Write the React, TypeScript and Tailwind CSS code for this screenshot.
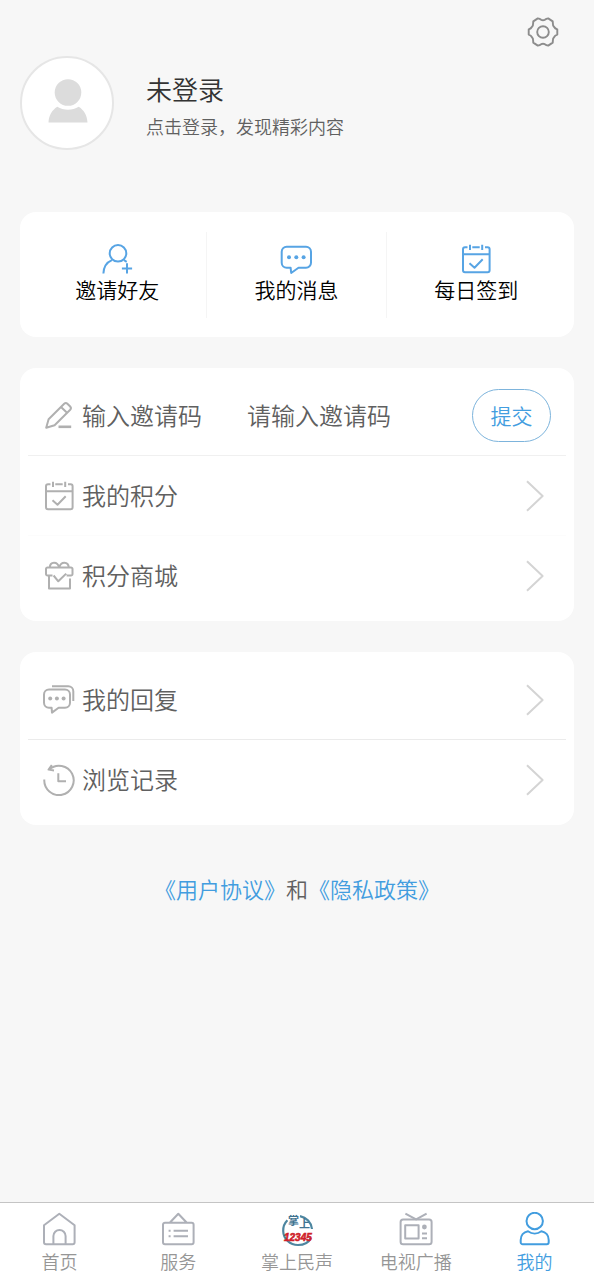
import type { ReactNode } from "react";
import clsx from "clsx";

type IconProps = { className?: string; size?: number; children: ReactNode };

const Icon = ({ className, size = 32, children }: IconProps) => (
  <svg
    width={size}
    height={size}
    viewBox={`0 0 ${size} ${size}`}
    fill="none"
    stroke="currentColor"
    strokeWidth="2"
    strokeLinejoin="round"
    aria-hidden="true"
    className={clsx("shrink-0", className)}
  >
    {children}
  </svg>
);

const GearIcon = () => (
  <svg
    width="32"
    height="32"
    viewBox="-16 -16 32 32"
    fill="none"
    stroke="currentColor"
    strokeWidth="1.9"
    strokeLinejoin="round"
    aria-hidden="true"
  >
    <path d="M14.3 2.6Q11.9 3.4 11.2 5Q9.7 6.4 9.9 8.4L9.7 10.6L5.2 13.6Q3.2 13.2 1.8 12.2Q0 11.4 -1.8 12.2Q-3.2 13.2 -5.2 13.6L-9.7 10.6L-9.9 8.4Q-9.7 6.4 -11.2 5Q-11.9 3.4 -14.3 2.6V-2.6Q-11.9 -3.4 -11.2 -5Q-9.7 -6.4 -9.9 -8.4L-9.7 -10.6L-5.2 -13.6Q-3.2 -13.2 -1.8 -12.2Q0 -11.4 1.8 -12.2Q3.2 -13.2 5.2 -13.6L9.7 -10.6L9.9 -8.4Q9.7 -6.4 11.2 -5Q11.9 -3.4 14.3 -2.6Z" />
    <circle r="5.8" />
  </svg>
);

const InviteIcon = () => (
  <Icon>
    <circle cx="17" cy="10.3" r="8.3" />
    <path d="M2.4 30.5C2.7 23.5 5.7 19.4 10.9 17.2M23 17.2L25.7 18.8M26 20.3V30.6M20.9 25.4H31.1" />
  </Icon>
);

const MessageIcon = () => (
  <Icon>
    <path d="M6.7 3.7H26A5 5 0 0 1 31 8.7V19.7A5 5 0 0 1 26 24.7H18.5L11.2 30L10.6 24.7H6.7A5 5 0 0 1 1.7 19.7V8.7A5 5 0 0 1 6.7 3.7Z" />
    <g fill="currentColor" stroke="none">
      <circle cx="9" cy="14.3" r="2" />
      <circle cx="16.3" cy="14.3" r="2" />
      <circle cx="23.6" cy="14.3" r="2" />
    </g>
  </Icon>
);

const CalendarIcon = () => (
  <Icon>
    <path d="M7.5 4.3H5A2 2 0 0 0 3 6.3V27.3A2 2 0 0 0 5 29.3H27.6A2 2 0 0 0 29.6 27.3V6.3A2 2 0 0 0 27.6 4.3H25M12.3 4.3H19.7M10 1.8V7M22.2 1.8V7M3 11.3H29.6M9.5 20.3L14.5 24.7L22.7 16.3" />
  </Icon>
);

const PencilIcon = () => (
  <Icon>
    <path d="M3.2 27.8L5.6 19.3L21.2 3.7Q22.8 2.2 24.4 3.7L27.2 6.5Q28.7 8.1 27.2 9.7L11.6 25.2ZM18 7L24 12.8" />
    <path d="M15.5 26.8H28.2" strokeWidth="2.6" />
  </Icon>
);

const GiftIcon = () => (
  <Icon>
    <path d="M9.5 15.5H4.5A1.5 1.5 0 0 1 3 14V9A1.5 1.5 0 0 1 4.5 7.5H28A1.5 1.5 0 0 1 29.5 9V14A1.5 1.5 0 0 1 28 15.5H23.6M6.8 7.5C7 1.2 14.6 1 16.2 7.5C17.8 1 25.4 1.2 25.8 7.5M6 15.5V28.4H27V18.5M10.6 15.5L15.3 21.3L23.2 13.6" />
  </Icon>
);

const ReplyIcon = () => (
  <Icon>
    <path d="M6 5.5H22A5 5 0 0 1 27 10.5V18.7A5 5 0 0 1 22 23.7H15.6L9 28.6L8.6 23.7H6A5 5 0 0 1 1 18.7V10.5A5 5 0 0 1 6 5.5ZM9 2.3H25.3A5 5 0 0 1 30.3 7.3V17" />
    <g fill="currentColor" stroke="none">
      <circle cx="7.2" cy="14.5" r="2" />
      <circle cx="13.9" cy="14.5" r="2" />
      <circle cx="20.6" cy="14.5" r="2" />
    </g>
  </Icon>
);

const HistoryIcon = () => (
  <Icon>
    <path d="M1.3 15.5A14.7 14.7 0 1 0 6.2 5.4M8.8 1L5.6 5.6L11 6.4M15.3 9.3V17.2H23" />
  </Icon>
);

const ChevronIcon = () => (
  <Icon className="text-[#d4d4d4]">
    <path d="M8 1.2L23.6 16L8 30.8" />
  </Icon>
);

const HomeIcon = () => (
  <Icon size={34}>
    <path d="M17.3 1.8L32.6 13.2V30.3A2 2 0 0 1 30.6 32.3H4A2 2 0 0 1 2 30.3V13.2ZM11.4 32V24A6.1 6.1 0 0 1 23.6 24V32" />
  </Icon>
);

const ServiceIcon = () => (
  <Icon size={34}>
    <path d="M4 10.7H30.6A2 2 0 0 1 32.6 12.7V30.3A2 2 0 0 1 30.6 32.3H4A2 2 0 0 1 2 30.3V12.7A2 2 0 0 1 4 10.7ZM9 10.5L17.3 1.8L25.6 10.5M7.6 18.7H9.6M12.6 18.7H27M7.6 24.3H9.6M12.6 24.3H27" />
  </Icon>
);

const TvIcon = () => (
  <Icon size={34}>
    <rect x="1.6" y="7.5" width="31" height="24.8" rx="2.5" />
    <rect x="6.2" y="13.2" width="13.4" height="13.4" />
    <path d="M6.4 1.6L17.1 7.4L27.6 1.6M23 21.4H28M23 26.2H28" />
    <circle cx="25.4" cy="15" r="2.4" fill="currentColor" stroke="none" />
  </Icon>
);

const MineIcon = () => (
  <Icon size={34}>
    <circle cx="16.7" cy="9" r="8.2" />
    <path d="M10 19.2C5.5 20 2.7 23.6 2.7 28V30.2A2 2 0 0 0 4.7 32.2H28.7A2 2 0 0 0 30.7 30.2V28C30.7 23.6 27.9 20 23.4 19.2C19.4 22.2 14 22.2 10 19.2Z" />
  </Icon>
);

const HotlineLogo = () => (
  <svg width="34" height="34" viewBox="0 0 34 34" aria-hidden="true" className="overflow-visible">
    <path
      d="M7.4 8.2A14.6 14.6 0 0 0 3.2 19C3.4 27 10 33 18 33C24 33 29 30 31 26M20 4.2A14.6 14.6 0 0 1 32 17"
      fill="none"
      stroke="#4d86a0"
      strokeWidth="2.2"
    />
    <g
      fill="#3f7391"
      fontSize="11"
      fontWeight="700"
      fontFamily="Noto Sans CJK SC, sans-serif"
    >
      <text x="8" y="13">
        掌
      </text>
      <text x="19" y="16">
        上
      </text>
    </g>
    <text
      x="4"
      y="29"
      fontSize="10"
      fontWeight="700"
      fontStyle="italic"
      fontFamily="Liberation Sans, sans-serif"
      fill="#cf1f2b"
      stroke="#cf1f2b"
      strokeWidth="0.6"
    >
      12345
    </text>
  </svg>
);

const actions = [
  { label: "邀请好友", icon: <InviteIcon /> },
  { label: "我的消息", icon: <MessageIcon /> },
  { label: "每日签到", icon: <CalendarIcon /> },
];

const tabs = [
  { label: "首页", icon: <HomeIcon /> },
  { label: "服务", icon: <ServiceIcon /> },
  { label: "掌上民声", icon: <HotlineLogo /> },
  { label: "电视广播", icon: <TvIcon /> },
  { label: "我的", icon: <MineIcon />, active: true },
];

const Card = ({ children }: { children: ReactNode }) => (
  <section className="rounded-2xl bg-white px-2 pt-2 pb-[5px]">{children}</section>
);

type MenuRowProps = { label: string; icon: ReactNode; divider?: string };

const MenuRow = ({ label, icon, divider }: MenuRowProps) => (
  <button
    type="button"
    className={clsx(
      "flex h-20 w-full items-center gap-[7px] px-[15px] text-left text-2xl",
      divider,
    )}
  >
    <span className="text-[#b0b0b0]">{icon}</span>
    <span className="flex-1 pb-0.5">{label}</span>
    <ChevronIcon />
  </button>
);

const App = () => {
  return (
    <div className="flex min-h-screen flex-col bg-[#f7f7f7] font-['Noto_Sans_CJK_SC',sans-serif] font-[350] text-[#606060]">
      <header className="px-5 pt-4">
        <div className="flex justify-end pr-[15px]">
          <button type="button" aria-label="设置" className="text-[#8c8c8c]">
            <GearIcon />
          </button>
        </div>
        <button type="button" className="mt-2 flex items-center gap-8 text-left">
          <span className="flex size-[94px] items-center justify-center rounded-full border-2 border-[#e6e6e6] bg-white">
            <svg
              width="40"
              height="44"
              viewBox="0 0 40 44"
              fill="#dcdcdc"
              aria-hidden="true"
              className="mb-1 ml-0.5"
            >
              <circle cx="20" cy="13.5" r="13.3" />
              <path d="M.5 43.5C.8 36.5 4 31 9.3 27.7C15.5 31.6 24.5 31.6 30.7 27.7C36 31 39.2 36.5 39.5 43.5Z" />
            </svg>
          </span>
          <span className="pb-0.5">
            <span className="block text-[26px] leading-[48px] text-[#333]">未登录</span>
            <span className="block text-lg leading-[26px]">点击登录，发现精彩内容</span>
          </span>
        </button>
      </header>

      <main className="mt-[62px] flex flex-1 flex-col gap-[31px] px-5">
        <section className="grid grid-cols-3 divide-x divide-[#f5f5f5] rounded-2xl bg-white px-2 pt-5 pb-[19px]">
          {actions.map((action) => (
            <button
              key={action.label}
              type="button"
              className="flex flex-col items-center pt-[11px] pb-[15px] text-[21px] leading-7 text-black"
            >
              <span className="text-[#57a4e4]">{action.icon}</span>
              {action.label}
            </button>
          ))}
        </section>

        <Card>
          <form
            className="flex h-20 items-center gap-[7px] border-b border-[#f0f0f0] px-[15px] text-2xl"
            onSubmit={(e) => e.preventDefault()}
          >
            <span className="text-[#b0b0b0]">
              <PencilIcon />
            </span>
            <label htmlFor="invite-code" className="shrink-0 pb-0.5">
              输入邀请码
            </label>
            <input
              id="invite-code"
              type="text"
              placeholder="请输入邀请码"
              className="ml-[38px] min-w-0 flex-1 bg-transparent pb-0.5 outline-none placeholder:text-[#606060]"
            />
            <button
              type="submit"
              className="h-[53px] w-[79px] shrink-0 rounded-full border border-[#7db4dc] pb-0.5 text-[21px] text-[#429ddf]"
            >
              提交
            </button>
          </form>
          <MenuRow label="我的积分" icon={<CalendarIcon />} divider="border-b border-[#fcfcfc]" />
          <MenuRow label="积分商城" icon={<GiftIcon />} />
        </Card>

        <Card>
          <MenuRow label="我的回复" icon={<ReplyIcon />} divider="border-b border-[#ebebeb]" />
          <MenuRow label="浏览记录" icon={<HistoryIcon />} />
        </Card>

        <p className="mt-4 text-center text-[22px] leading-8">
          <a href="#agreement" className="text-[#429ddf]">
            《用户协议》
          </a>
          和
          <a href="#privacy" className="text-[#429ddf]">
            《隐私政策》
          </a>
        </p>
      </main>

      <nav className="grid grid-cols-5 border-t border-[#c4c4c4] bg-white pt-[9px] pb-1">
        {tabs.map((tab) => (
          <a
            key={tab.label}
            href="#"
            aria-current={tab.active ? "page" : undefined}
            className={clsx(
              "flex flex-col items-center text-lg leading-[30px]",
              tab.active ? "text-[#429ddf]" : "text-[#969696]",
            )}
          >
            <span className={clsx(!tab.active && "text-[#adb0b8]")}>{tab.icon}</span>
            {tab.label}
          </a>
        ))}
      </nav>
    </div>
  );
};

export default App;
